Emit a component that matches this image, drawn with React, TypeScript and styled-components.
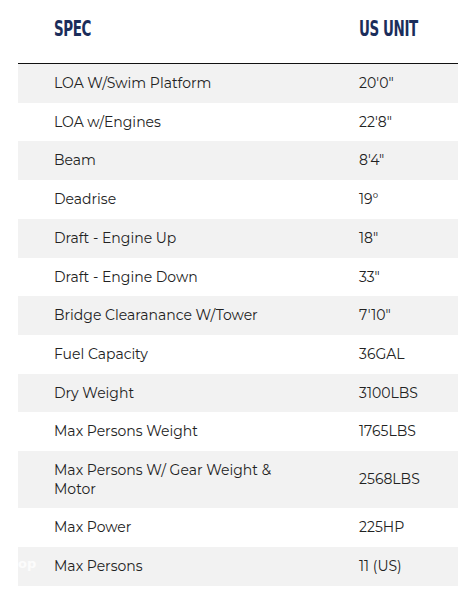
import React from "react";
import styled, { createGlobalStyle } from "styled-components";

const Global = createGlobalStyle`
  html, body { margin: 0; padding: 0; background: #fff; }
  body { font-family: "Montserrat", "DejaVu Sans", sans-serif; }
`;

const Page = styled.div`
  position: relative;
  padding-left: 18px;
  width: 458px;
  box-sizing: border-box;
  overflow: hidden;
`;

const Table = styled.div`
  display: grid;
  grid-template-columns: 341px 1fr;
`;

const HeadCell = styled.div<{ $first?: boolean }>`
  height: 64px;
  padding-left: ${(p) => (p.$first ? "36px" : "0")};
  display: flex;
  align-items: center;
  padding-bottom: 6px;
  box-sizing: border-box;
  border-bottom: 1.5px solid #111;
  font-family: "DejaVu Sans Condensed", "DejaVu Sans", sans-serif;
  font-weight: bold;
  font-size: 22px;
  letter-spacing: -0.6px;
  color: #1b2d5b;
`;

const HeadText = styled.span`
  display: inline-block;
  transform: scaleX(0.68);
  transform-origin: left center;
  white-space: nowrap;
`;

const Cell = styled.div<{ $alt: boolean; $first?: boolean }>`
  background: ${(p) => (p.$alt ? "#f2f2f2" : "#fff")};
  padding: 10px 0 10px ${(p) => (p.$first ? "36px" : "0")};
  padding-right: ${(p) => (p.$first ? "70px" : "0")};
  line-height: 18.7px;
  font-size: 14px;
  color: #222;
  display: flex;
  align-items: center;
`;

const Watermark = styled.div`
  position: absolute;
  left: 18px;
  top: 556px;
  font-family: "DejaVu Sans", sans-serif;
  font-weight: bold;
  font-size: 13px;
  color: rgba(255, 255, 255, 0.8);
`;

const rows: [string, string][] = [
  ["LOA W/Swim Platform", "20'0\""],
  ["LOA w/Engines", "22'8\""],
  ["Beam", "8'4\""],
  ["Deadrise", "19°"],
  ["Draft - Engine Up", "18\""],
  ["Draft - Engine Down", "33\""],
  ["Bridge Clearanance W/Tower", "7'10\""],
  ["Fuel Capacity", "36GAL"],
  ["Dry Weight", "3100LBS"],
  ["Max Persons Weight", "1765LBS"],
  ["Max Persons W/ Gear Weight & Motor", "2568LBS"],
  ["Max Power", "225HP"],
  ["Max Persons", "11 (US)"],
];

export default function App() {
  return (
    <Page>
      <Global />
      <Table>
        <HeadCell $first>
          <HeadText>SPEC</HeadText>
        </HeadCell>
        <HeadCell>
          <HeadText>US UNIT</HeadText>
        </HeadCell>
        {rows.map(([k, v], i) => (
          <React.Fragment key={k}>
            <Cell $alt={i % 2 === 0} $first>
              {k}
            </Cell>
            <Cell $alt={i % 2 === 0}>{v}</Cell>
          </React.Fragment>
        ))}
      </Table>
      <Watermark>op</Watermark>
    </Page>
  );
}
